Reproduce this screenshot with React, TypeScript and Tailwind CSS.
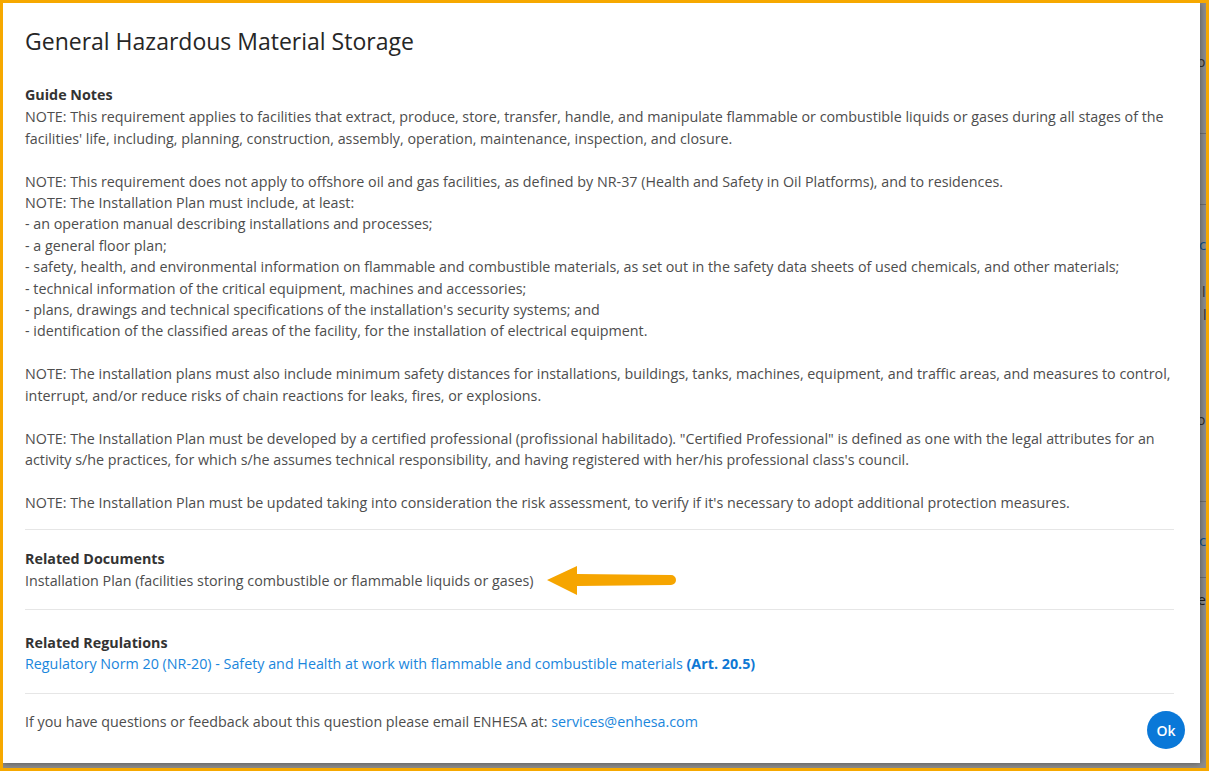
import { type ReactNode } from 'react';

const font = { fontFamily: '"Open Sans", "Liberation Sans", sans-serif' };

// Guide notes text, one entry per line; empty string = blank line
const guideLines = [
  "NOTE: This requirement applies to facilities that extract, produce, store, transfer, handle, and manipulate flammable or combustible liquids or gases during all stages of the facilities' life, including, planning, construction, assembly, operation, maintenance, inspection, and closure.",
  '',
  'NOTE: This requirement does not apply to offshore oil and gas facilities, as defined by NR-37 (Health and Safety in Oil Platforms), and to residences.',
  'NOTE: The Installation Plan must include, at least:',
  '- an operation manual describing installations and processes;',
  '- a general floor plan;',
  '- safety, health, and environmental information on flammable and combustible materials, as set out in the safety data sheets of used chemicals, and other materials;',
  '- technical information of the critical equipment, machines and accessories;',
  "- plans, drawings and technical specifications of the installation's security systems; and",
  '- identification of the classified areas of the facility, for the installation of electrical equipment.',
  '',
  'NOTE: The installation plans must also include minimum safety distances for installations, buildings, tanks, machines, equipment, and traffic areas, and measures to control, interrupt, and/or reduce risks of chain reactions for leaks, fires, or explosions.',
  '',
  'NOTE: The Installation Plan must be developed by a certified professional (profissional habilitado). "Certified Professional" is defined as one with the legal attributes for an activity s/he practices, for which s/he assumes technical responsibility, and having registered with her/his professional class\'s council.',
  '',
  "NOTE: The Installation Plan must be updated taking into consideration the risk assessment, to verify if it's necessary to adopt additional protection measures.",
];

const Section = ({ title, children }: { title: string; children: ReactNode }) => (
  <div>
    <h3 className="text-[14.3px] leading-[21.4px] font-bold text-[#333333]">{title}</h3>
    {children}
  </div>
);

const Divider = () => <div className="h-px bg-[#e6e6e6]" />;

const PointerArrow = () => (
  <svg width="132" height="33" viewBox="0 0 132 33" className="shrink-0">
    <path
      d="M2 16 L32 2 L32 10 L126 11 A5 5 0 0 1 126 21 L32 22 L32 31 Z"
      fill="#f6a500"
    />
  </svg>
);

// Dimmed page that sits behind the dialog
const BackdropPage = () => (
  <div className="h-full w-full bg-[#8e8e8e] text-[14px] text-[#2e2e2e] whitespace-nowrap" style={font}>
    <div className="pl-[1194px] pt-[48px] h-[130px]">on information</div>
    <div className="h-px bg-[#6f6f6f]" />
    <div className="h-[70px]" />
    <div className="h-px bg-[#6f6f6f]" />
    <div className="pl-[1196px] pt-[28px] h-[75px] text-[15px] text-[#0d4f8a]">ch</div>
    <div className="pl-[1199px] leading-[23px]">le</div>
    <div className="pl-[1200px] leading-[23px]">l</div>
    <div className="pl-[1194px] pt-[83px] h-[140px]">on information</div>
    <div className="h-[35px]" />
    <div className="h-px bg-[#6f6f6f]" />
    <div className="pl-[1196px] pt-[27px] h-[75px] text-[15px] text-[#0d4f8a]">ch</div>
    <div className="h-px bg-[#6f6f6f]" />
    <div className="flex h-[80px]">
      <div className="w-[338px]" />
      <div className="w-px bg-[#7a7a7a]" />
      <div className="w-[32px]" />
      <div className="w-px bg-[#7a7a7a]" />
      <div className="flex-1 pl-[27px] text-[15px] text-[#1f1f1f]">
        <div className="flex flex-col">
          <span className="pl-[834px] pt-[10px] leading-[23px]">le</span>
          <span className="pl-[834px] leading-[23px]">f</span>
          <span className="leading-[23px]">Safety and Health at work with flammable and combustible materials.</span>
        </div>
      </div>
    </div>
  </div>
);

const App = () => {
  return (
    <div className="w-[1209px] h-[771px] border-[3px] border-[#f6a800] relative overflow-hidden" style={font}>
      <BackdropPage />

      {/* Dialog */}
      <div className="absolute left-0 top-0 w-[1197px] h-[760px] bg-white shadow-[0_0_7px_rgba(0,0,0,0.45)] pl-[22px] pr-[26px] pt-[23px]">
        <h2 className="text-[23px] leading-[30px] text-[#262626]">General Hazardous Material Storage</h2>

        <div className="mt-[28px]">
          <Section title="Guide Notes">
            <div className="mt-[1px] text-[14.3px] leading-[21.4px] text-[#4d4d4d]">
              {guideLines.map((line, i) => (
                <p key={i}>{line === '' ? '\u00a0' : line}</p>
              ))}
            </div>
          </Section>
        </div>

        <div className="mt-[16px] mb-[18px]">
          <Divider />
        </div>

        <Section title="Related Documents">
          <div className="flex items-center gap-[11px] h-[21.4px]">
            <span className="text-[14.3px] leading-[21.4px] text-[#4d4d4d]">
              Installation Plan (facilities storing combustible or flammable liquids or gases)
            </span>
            <PointerArrow />
          </div>
        </Section>

        <div className="mt-[18px] mb-[22px]">
          <Divider />
        </div>

        <Section title="Related Regulations">
          <p className="text-[14.3px] leading-[21.4px] text-[#1a86dc]">
            Regulatory Norm 20 (NR-20) - Safety and Health at work with flammable and combustible materials{' '}
            <span className="font-bold text-[#0f78d4]">(Art. 20.5)</span>
          </p>
        </Section>

        <div className="mt-[18px] mb-[17px]">
          <Divider />
        </div>

        <p className="text-[14.3px] leading-[21.4px] text-[#4d4d4d]">
          If you have questions or feedback about this question please email ENHESA at:{' '}
          <span className="text-[#1a86dc]">services@enhesa.com</span>
        </p>

        <button className="absolute right-[15px] bottom-[14px] w-[38px] h-[38px] rounded-full bg-[#0a78d8] text-white text-[14px] font-semibold flex items-center justify-center">
          Ok
        </button>
      </div>
    </div>
  );
};

export default App;
